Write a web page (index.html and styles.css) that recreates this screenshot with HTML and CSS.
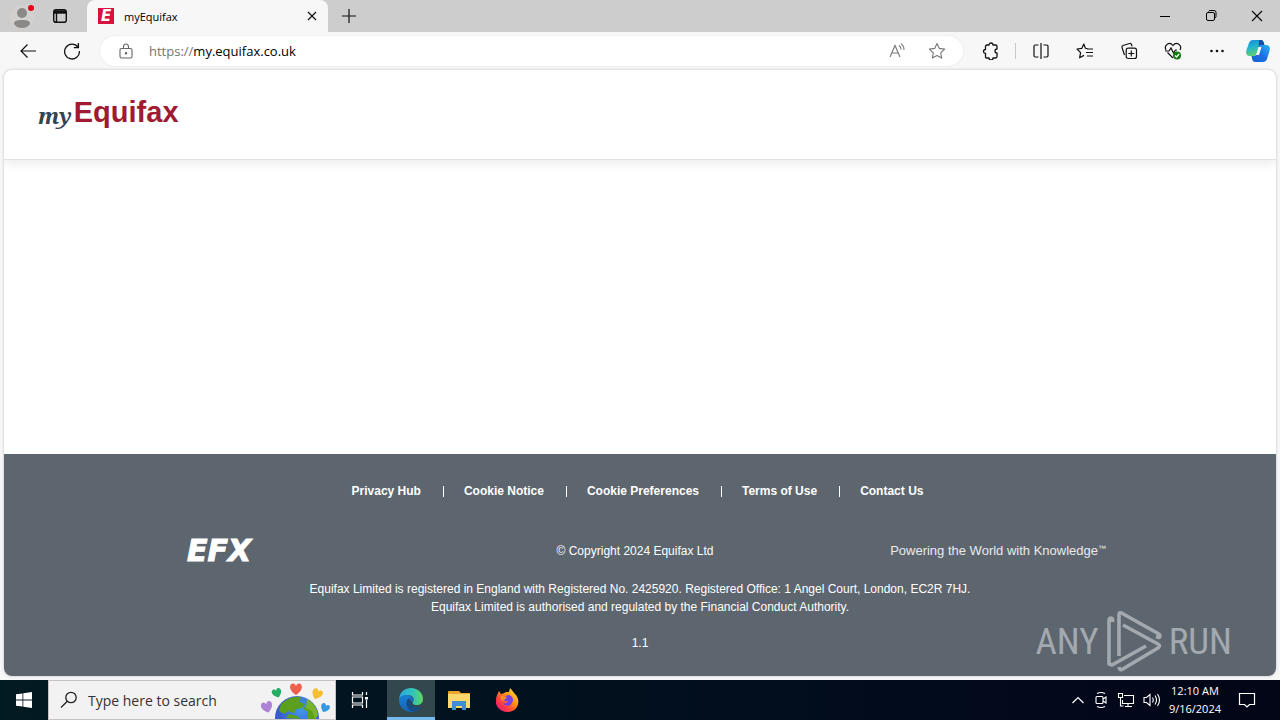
FILE: index.html
```html
<!DOCTYPE html>
<html lang="en">
<head>
<meta charset="utf-8">
<title>myEquifax</title>
<link rel="stylesheet" href="styles.css">
</head>
<body>
<div class="tabstrip">
  <button class="btn profile" aria-label="Profile">
    <svg width="26" height="28" viewBox="0 0 26 28"><circle cx="12" cy="15" r="12" fill="#d3d1cf"/><circle cx="12" cy="11" r="5" fill="#8b8987"/><path d="M4 22c0-3 2-4 8-4s8 1 8 4c-2 3-5 4-8 4s-6-1-8-4z" fill="#8b8987"/><circle cx="21" cy="6" r="3" fill="#e30613"/></svg>
  </button>
  <button class="btn tabmenu" aria-label="Tab actions">
    <svg width="16" height="16" viewBox="0 0 16 16" fill="none" stroke="#111" stroke-width="1.4"><rect x="1.7" y="1.7" width="12.6" height="12.6" rx="2.4"/><path d="M2 4h12" stroke-width="3.4"/><path d="M4.5 4v10"/></svg>
  </button>
  <div class="tab">
    <span class="favicon">E</span>
    <span class="tab-title">myEquifax</span>
    <button class="btn" aria-label="Close tab"><svg width="10" height="10" viewBox="0 0 10 10" stroke="#111" stroke-width="1.2"><path d="M1 1l8 8M9 1l-8 8"/></svg></button>
  </div>
  <button class="btn newtab" aria-label="New tab"><svg width="14" height="14" viewBox="0 0 14 14" stroke="#111" stroke-width="1.2"><path d="M7 0v14M0 7h14"/></svg></button>
  <div class="window-buttons">
    <button class="btn" aria-label="Minimise"><svg width="12" height="12" viewBox="0 0 12 12" stroke="#000"><path d="M1 6.500h10"/></svg></button>
    <button class="btn" aria-label="Restore"><svg width="12" height="12" viewBox="0 0 12 12" fill="none" stroke="#000"><rect x="1.500" y="2.500" width="8" height="8" rx="1.500"/><path d="M3.500 1.500q.5-1 1.500-1h4q2 0 2 2v4q0 1-1 1.500"/></svg></button>
    <button class="btn" aria-label="Close"><svg width="12" height="12" viewBox="0 0 12 12" stroke="#000" stroke-width="1.1"><path d="M1 1l10 10M11 1L1 11"/></svg></button>
  </div>
</div>

<div class="toolbar">
  <button class="btn nav" aria-label="Back"><svg width="18" height="16" viewBox="0 0 18 16" fill="none" stroke="#111" stroke-width="1.2"><path d="M17 8H2M8.500 1.500L2 8l6.500 6.500"/></svg></button>
  <button class="btn nav" aria-label="Refresh"><svg width="18" height="18" viewBox="0 0 18 18" fill="none" stroke="#111" stroke-width="1.3"><path d="M15 5.200A7.400 7.400 0 1 0 16.400 9M15.400 1v4.600h-4.600"/></svg></button>
  <div class="address">
    <svg width="14" height="16" viewBox="0 0 14 16" fill="none" stroke="#666" stroke-width="1.1"><rect x="1" y="5.500" width="12" height="9.500" rx="1.500"/><path d="M4.500 5.500V4a2.500 3 0 0 1 5 0v1.500"/><circle cx="7" cy="10.200" r=".7" fill="#666"/></svg>
    <span class="url"><span class="scheme">https://</span>my.equifax.co.uk</span>
    <button class="btn" aria-label="Read aloud"><svg width="18" height="16" viewBox="0 0 18 16" fill="none" stroke="#777" stroke-width="1.1"><path d="M2 14L7 2.500 12 14M3.700 10h6.600M11 2.500q2 1.300 2 4M13 .8q3 1.800 3 6.200"/></svg></button>
    <button class="btn" aria-label="Add to favourites"><svg width="18" height="18" viewBox="0 0 18 18" fill="none" stroke="#777" stroke-width="1.1" stroke-linejoin="round"><path d="M9 1.500l2.300 4.900 5.300.7-3.900 3.700 1 5.300L9 13.500l-4.700 2.600 1-5.300L1.400 7.100l5.300-.7z"/></svg></button>
  </div>
  <div class="tools">
    <button class="btn" aria-label="Extensions"><svg width="18" height="18" viewBox="0 0 18 18" fill="none" stroke="#111" stroke-width="1.3" stroke-linejoin="round"><path d="M6 3h2a2 2 0 0 1 4 0h2.500q1.500 0 1.500 1.500V7a2 2 0 0 0 0 4v3.500Q16 16 14.500 16H12a2 2 0 0 1-4 0H5.500Q4.500 16 4.500 15v-3.500a2 2 0 1 1 0-4V4.500Q4.500 3 6 3z"/></svg></button>
    <span class="divider"></span>
    <button class="btn" aria-label="Split screen"><svg width="18" height="18" viewBox="0 0 18 18" fill="none" stroke="#111" stroke-width="1.200"><path d="M9 1v16M6.500 3H3.200Q2 3 2 4.200v9.600Q2 15 3.200 15h3.300M11.500 3h3.300Q16 3 16 4.200v9.600q0 1.200-1.200 1.200h-3.300"/></svg></button>
    <button class="btn" aria-label="Favourites"><svg width="18" height="18" viewBox="0 0 18 18" fill="none" stroke="#111" stroke-width="1.200" stroke-linejoin="round"><path d="M9.500 6.500L7.800 2 5.900 6.300 1 7l3.600 3.600-1 5.200L8 13.400M11 7h6M10 10.500h7M11 14h6M9.500 6.500h2"/></svg></button>
    <button class="btn" aria-label="Collections"><svg width="18" height="18" viewBox="0 0 18 18" fill="none" stroke="#111" stroke-width="1.200"><rect x="6.200" y="6.200" width="10.300" height="10.300" rx="2"/><path d="M11.300 8.500v6M8.300 11.500h6M4.500 13L2 5.500q-.5-1.500 1-2l6.500-2q1.500-.5 2 1l.5 1.800"/></svg></button>
    <button class="btn" aria-label="Browser essentials"><svg width="18" height="18" viewBox="0 0 18 18" fill="none" stroke="#111" stroke-width="1.200"><path d="M2 8C-.5 3 5.500-1 9 3.500 12.500-1 18.500 3 16 8M1 9h4l2-3 2.500 5L11.500 8H13M3.500 10.500L9 16"/><circle cx="13" cy="13.500" r="4" fill="#107c10" stroke="none"/><path d="M11 13.500l1.500 1.500 2.600-3" stroke="#fff"/></svg></button>
    <button class="btn" aria-label="More"><svg width="18" height="18" viewBox="0 0 18 18" fill="#111"><circle cx="3.500" cy="9" r="1.300"/><circle cx="9" cy="9" r="1.300"/><circle cx="14.500" cy="9" r="1.300"/></svg></button>
    <button class="btn copilot" aria-label="Copilot"><svg width="24" height="24" viewBox="0 0 24 24"><defs><linearGradient id="ca" x2=".3" y2="1"><stop stop-color="#1189d8"/><stop offset=".5" stop-color="#20b6cf"/><stop offset="1" stop-color="#5fd16d"/></linearGradient><linearGradient id="cb" x1="1" x2="0" y2="1"><stop stop-color="#2bb7f5"/><stop offset=".5" stop-color="#1f6fe5"/><stop offset="1" stop-color="#1264cc"/></linearGradient></defs><path d="M7 1h8q2 0 2.600 2l.8 3h-3q-2 0-2.700 2l-2 7q-.6 2-2.700 2H3q-4-1-2.500-6L3 4q1-3 4-3z" fill="url(#ca)"/><path d="M17 23H9q-2 0-2.600-2l-.9-4H8q2 0 2.700-2l2-7q.6-2 2.700-2H21q4 1 2.500 6L21 20q-1 3-4 3z" fill="url(#cb)"/><path d="M15 1q2 0 2.600 2l.8 3h-3q-2 0-2.700 2l.3-7z" fill="#174ea6"/><path d="M12.500 8h3l-2.500 8h-3z" fill="#f7f7f7"/></svg></button>
  </div>
</div>

<main class="page">
  <header class="site-header">
    <a class="logo" href="#"><span class="logo-my">my</span><span class="logo-name">Equifax</span></a>
  </header>
  <div class="content"></div>
  <footer class="site-footer">
    <nav class="links">
      <a href="#">Privacy Hub</a><a href="#">Cookie Notice</a><a href="#">Cookie Preferences</a><a href="#">Terms of Use</a><a href="#">Contact Us</a>
    </nav>
    <div class="brand-row">
      <span class="efx">EFX</span>
      <span>© Copyright 2024 Equifax Ltd</span>
      <span class="slogan">Powering the World with Knowledge<span class="tm">™</span></span>
    </div>
    <p class="legal">Equifax Limited is registered in England with Registered No. 2425920. Registered Office: 1 Angel Court, London, EC2R 7HJ.<br>Equifax Limited is authorised and regulated by the Financial Conduct Authority.</p>
    <p class="version">1.1</p>
  </footer>
  <div class="watermark">
    <span>ANY</span>
    <svg width="56" height="62" viewBox="0 0 56 62" fill="none" stroke="currentColor" stroke-width="3.600" stroke-linejoin="round" stroke-linecap="butt"><path d="M6.500 12Q7 8 5 8 3 8 3 11v43l3 1 34-19M13 46V4.500Q13 2 15.500 3L53 24q2 2 0 3.500l-3-1M17 15l35 19q3 1.500 0 4L16 59.500q-2.500 1-3-2.500"/></svg>
    <span>RUN</span>
  </div>
</main>

<div class="taskbar">
  <button class="btn start" aria-label="Start"><svg width="16" height="16" viewBox="0 0 16 16" fill="#fff"><path d="M0 2.300L6.500 1.400v6.200H0zM7.300 1.300L16 0v7.600H7.300zM0 8.400h6.500v6.200L0 13.700zM7.300 8.400H16V16l-8.700-1.300z"/></svg></button>
  <div class="search">
    <svg width="18" height="18" viewBox="0 0 18 18" fill="none" stroke="#222" stroke-width="1.300"><circle cx="11" cy="6.500" r="5.200"/><path d="M7.300 10.200L1 16.500"/></svg>
    <input class="search-input" type="text" placeholder="Type here to search" aria-label="Search">
    <svg width="74" height="38" viewBox="0 0 74 38"><defs><radialGradient id="sea" cx=".6" cy=".3"><stop stop-color="#3f9be6"/><stop offset="1" stop-color="#3b5bd0"/></radialGradient><path id="heart" d="M0 6C-9 0-6-6-2.500-5.500Q-.5-5 0-3 .5-5 2.500-5.500C6-6 9 0 0 6z"/></defs><circle cx="36" cy="37" r="22" fill="url(#sea)"/><path d="M20 23q10-9 20-7l-2 5 6 2-3 4-6 1-2 4-6-2-4 3-5-3zM46 18q9 5 11 16l-3 4h-8l1-7-5-3 4-4zM25 37l3-4 8 2 3 3z" fill="#5b9f1d"/><path d="M46 18q9 5 11 16l-3 4-3-8-6-3z" fill="#79b52a"/><use href="#heart" x="35" y="8" fill="#f0604d"/><use href="#heart" transform="translate(16 12) rotate(-20) scale(.8)" fill="#24ac62"/><use href="#heart" transform="translate(56 13) rotate(25) scale(.9)" fill="#f8bd31"/><use href="#heart" transform="translate(6 26) rotate(-15) scale(.95)" fill="#ae82d6"/><use href="#heart" transform="translate(64 27) rotate(25) scale(.75)" fill="#3499e2"/></svg>
  </div>
  <button class="btn app taskview" aria-label="Task view"><svg width="18" height="18" viewBox="0 0 18 18" fill="none" stroke="#fff" stroke-width="1.200"><path d="M1.500 1v3h10V1M1.500 17v-3h10v3M1.500 6h10v6h-10zM15.500 1v3M15.500 9v8"/><path d="M14 6h3v2.500h-3z" fill="#fff" stroke="none"/></svg></button>
  <button class="btn app active" aria-label="Microsoft Edge"><svg width="26" height="26" viewBox="0 0 26 26"><defs><linearGradient id="ea"><stop stop-color="#2ba7e5"/><stop offset=".6" stop-color="#31c6b6"/><stop offset="1" stop-color="#62d65d"/></linearGradient><linearGradient id="eb" x2=".5" y2="1"><stop stop-color="#1b83d9"/><stop offset="1" stop-color="#155fae"/></linearGradient></defs><path d="M1 12C2 4.500 7 1 13 1c7 0 12 5 12 11 0 4-3 6-6 6-4 0-5-1.500-4-3 2-3 0-7-5-7C5 8 2 10 1 12z" fill="url(#ea)"/><path d="M1 12c2-3 5-4.500 9-4 4 .6 6 4 5 6.500-4-2-7 2-4 6 3 3 8 3 12-1-2 4-6 5.500-10 5.500C6 25 .5 19 1 12z" fill="url(#eb)"/><path d="M9 13c-2 5 1 11 7 11.600 3-.5 6-2.600 7-5-5 2-10 1-11-5q0-2 1.500-3Q10.500 11 9 13z" fill="#174b83"/></svg></button>
  <button class="btn app" aria-label="File Explorer"><svg width="22" height="20" viewBox="0 0 22 20"><path d="M0 2q0-1 1-1h10l2 2h9v5H0z" fill="#e9a72d"/><path d="M0 4h22v14H0z" fill="#fbd86e"/><path d="M4 11h14v9h-4v-4H8v4H4z" fill="#3b8fd2"/></svg></button>
  <button class="btn app" aria-label="Firefox"><svg width="24" height="24" viewBox="0 0 24 24"><defs><linearGradient id="fa" x1="1" x2=".1" y2="1"><stop stop-color="#fff14a"/><stop offset=".4" stop-color="#ff980e"/><stop offset=".75" stop-color="#ff3647"/><stop offset="1" stop-color="#e31587"/></linearGradient></defs><path d="M3 5l1-2 2 3 2-.5L11 4l3 0 1-4c2 2 3 3.500 4 5l2 2c2 3 3 6 2 9-1 5-5 8-11 8C5 24 0 18 1 12c0-3 1-5 2-7z" fill="url(#fa)"/><path d="M8 9c3 0 3-2 6-2 4 1 5 5 3 8-2 4-8 3-9 0 2 1 4 0 5-2-2 0-4 0-5-1-2 0-2-2 0-3z" fill="#7542e5"/><path d="M6 8q4-1 6 2-2 0-2 1.500L7 13q-2-2-1-5z" fill="#ff8b2b"/></svg></button>
  <div class="tray">
    <svg width="14" height="8" viewBox="0 0 14 8" fill="none" stroke="#fff" stroke-width="1.200"><path d="M1.500 7L7 1.500 12.500 7"/></svg>
    <svg width="16" height="18" viewBox="0 0 16 18" fill="none" stroke="#fff" stroke-width="1.100"><rect x="3" y="5.500" width="7" height="7" rx="1"/><path d="M10 8l3-2v6l-3-2M4 2.500q4-2 8 0M4 15.500q4 2 8 0"/></svg>
    <svg width="18" height="16" viewBox="0 0 18 16" fill="none" stroke="#fff" stroke-width="1.100"><path d="M7 3.500h9.500v8H5.500V8M8 14.500h7M11 11.500v3M3.500 6v8h3"/><path d="M1.500 1.500h4v4h-4z"/></svg>
    <svg width="18" height="16" viewBox="0 0 18 16" fill="none" stroke="#fff" stroke-width="1.100"><path d="M1 5.500h2.500L7 2.500v11l-3.500-3H1zM9.500 5.500q1.500 2.500 0 5M12 3.500q3 4.500 0 9M14.500 2q4 6 0 12"/></svg>
    <div class="clock"><span>12:10 AM</span><span>9/16/2024</span></div>
    <svg width="18" height="18" viewBox="0 0 18 18" fill="none" stroke="#fff" stroke-width="1.200"><path d="M1.500 2.500h15v11h-5L9 16l-2.500-2.500h-5z"/></svg>
  </div>
</div>
</body>
</html>
```
FILE: styles.css
```css
* { box-sizing: border-box; }
body { margin: 0; min-height: 100vh; display: flex; flex-direction: column; background: #f7f7f7; color: #000; font-family: "Open Sans", "Noto Sans", sans-serif; font-size: 12px; }
svg { display: block; flex: none; }
a { color: inherit; text-decoration: none; }
p { margin: 0; }
.btn { display: flex; align-items: center; justify-content: center; flex: none; padding: 0; border: 0; background: none; }

.tabstrip { display: flex; height: 32px; background: #cdcdcd; }
.profile { padding-left: 10px; }
.tabmenu { width: 48px; }
.tab { display: flex; align-items: center; width: 241px; margin-left: 3px; padding: 0 11px; background: #f7f7f7; border-radius: 8px 8px 0 0; }
.favicon { width: 16px; height: 16px; background: #d8123f; color: #fff; font: italic bold 15px/16px "DejaVu Sans", sans-serif; text-align: center; }
.tab-title { flex: 1; padding-left: 10px; font-size: 11px; }
.newtab { width: 42px; }
.window-buttons { display: flex; gap: 34px; margin-left: auto; padding-right: 17px; }

.toolbar { display: flex; align-items: center; height: 38px; padding-left: 6px; }
.nav { width: 44px; }
.address { flex: 1; display: flex; align-items: center; gap: 22px; height: 30px; margin-left: 6px; padding: 0 17px 0 19px; background: #fff; border-radius: 16px; box-shadow: 0 0 2px #ddd; }
.url { flex: 1; margin-left: -6px; font-size: 13px; }
.scheme { color: #757575; }
.tools { display: flex; align-items: center; gap: 26px; padding: 0 10px 0 18px; }
.divider { width: 1px; height: 16px; margin: 0 -10px; background: #c8c8c8; }
.copilot { margin-left: -6px; }

.page { position: relative; flex: 1; display: flex; flex-direction: column; margin: 0 4px 4px; background: #fff; border-radius: 8px; overflow: hidden; box-shadow: 0 0 3px #bbb; }
.site-header { display: flex; padding: 24px 34px 28px; border-bottom: 1px solid #e2e2e2; box-shadow: 0 4px 10px #ececec; }
.logo { display: flex; align-items: flex-end; gap: 2px; line-height: 37px; }
.logo-my { color: #36424d; font-family: "Noto Serif", "Liberation Serif", serif; font-style: italic; font-weight: bold; font-size: 22px; line-height: 32px; }
.logo-name { color: #9f1b32; font-family: "Liberation Sans", Arial, sans-serif; font-weight: bold; font-size: 29px; }
.content { flex: 1; }
.site-footer { padding: 32px 0 24px; background: #5d666e; color: #fff; font-family: "Liberation Sans", Arial, sans-serif; font-size: 12px; line-height: 18px; text-align: center; }
.links { display: flex; align-items: center; justify-content: center; padding-right: 3px; font-weight: bold; }
.links a { line-height: 11px; padding: 0 22px 0 20px; border-left: 1px solid #fff; }
.links a:first-child { border-left: 0; }
.brand-row { display: grid; grid-template-columns: 1fr auto 1fr; align-items: center; margin-top: 36px; padding: 0 170px 0 160px; line-height: 36px; }
.efx { padding-left: 23px; text-align: left; font-family: "DejaVu Sans", sans-serif; font-style: italic; font-weight: bold; font-size: 30px; -webkit-text-stroke: 1px #fff; }
.slogan { text-align: right; font-size: 13px; color: #e8eaec; }
.tm { font-size: 8px; vertical-align: 4px; line-height: 1; }
.legal { margin-top: 11px; }
.version { margin-top: 18px; }
.watermark { position: absolute; right: 44px; bottom: 4px; display: flex; align-items: center; gap: 7px; color: #a3a9ae; font-family: "Roboto Condensed", Roboto, sans-serif; font-size: 37px; }

.taskbar { display: flex; height: 40px; background: linear-gradient(90deg, #021a22, #020b1c 70%, #020617); color: #fff; }
.start { width: 48px; }
.search { display: flex; align-items: center; width: 288px; padding: 0 0 0 11px; background: #f2f2f2; border: 1px solid #c9c2c2; }
.search-input { flex: 1; min-width: 0; padding: 0 0 0 10px; border: 0; outline: 0; background: none; font-family: "Open Sans", "Noto Sans", sans-serif; font-size: 14px; }
.search-input::placeholder { color: #333; opacity: 1; }
.app { width: 48px; }
.taskview { margin-right: 3px; }
.active { background: #33474e; border-bottom: 3px solid #76b9ed; padding-top: 2px; }
.tray { display: flex; align-items: center; gap: 8px; margin-left: auto; padding-right: 24px; }
.clock { display: flex; flex-direction: column; align-items: center; margin: 0 9px 0 0; font-size: 11px; line-height: 18px; }
```
